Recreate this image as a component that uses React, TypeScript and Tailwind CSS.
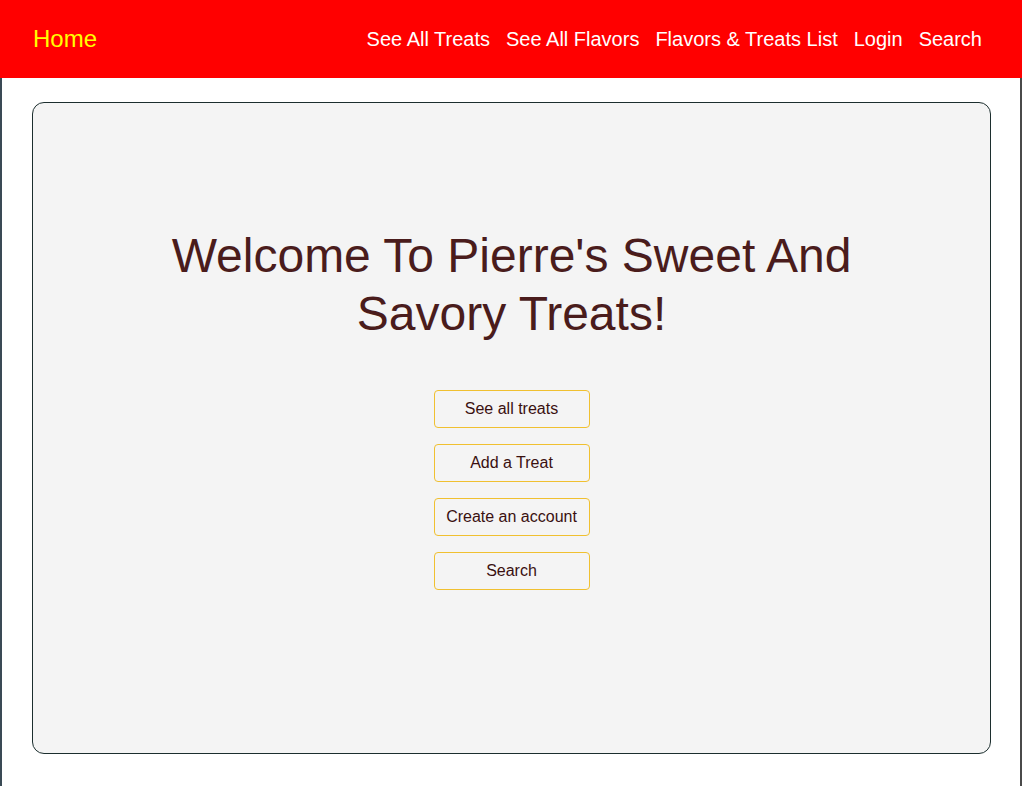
const navLinks = ["See All Treats", "See All Flavors", "Flavors & Treats List", "Login", "Search"]
const actions = ["See all treats", "Add a Treat", "Create an account", "Search"]

function Header() {
  return (
    <div className="h-[78px] bg-[#ff0000] flex items-center justify-between pl-[33px] pr-[40px]">
      <a className="text-[24px] text-[#ffff00] leading-none">Home</a>
      <div className="flex items-center gap-[16px]">
        {navLinks.map((link, index) => (
          <a className="text-[20px] text-white leading-none" key={index}>
            {link}
          </a>
        ))}
      </div>
    </div>
  )
}

function App() {
  return (
    <div className="w-[1022px] h-[786px] bg-white overflow-hidden" style={{ fontFamily: '"Liberation Sans", Arial, sans-serif' }}>
      <Header />
      <div className="h-[708px] border-l-2 border-r-2 border-l-[#3a4a55] border-r-[#4a4a4a] pt-[24px] pl-[30px] pr-[29px]">
        <div className="h-[652px] rounded-[12px] border border-[#1c2e2e] bg-[#f4f4f4] flex flex-col items-center pt-[124px]">
          <h1 className="w-[720px] text-center text-[48px] leading-[58px] text-[#4a1c1c]">
            Welcome To Pierre's Sweet And Savory Treats!
          </h1>
          <div className="mt-[47px] flex flex-col gap-[16px] w-[156px]">
            {actions.map((action, index) => (
              <button
                className="h-[38px] w-full rounded-[4px] border border-[#f0c030] text-[16px] text-[#3a1010] bg-transparent"
                key={index}
              >
                {action}
              </button>
            ))}
          </div>
        </div>
      </div>
    </div>
  )
}

export default App
